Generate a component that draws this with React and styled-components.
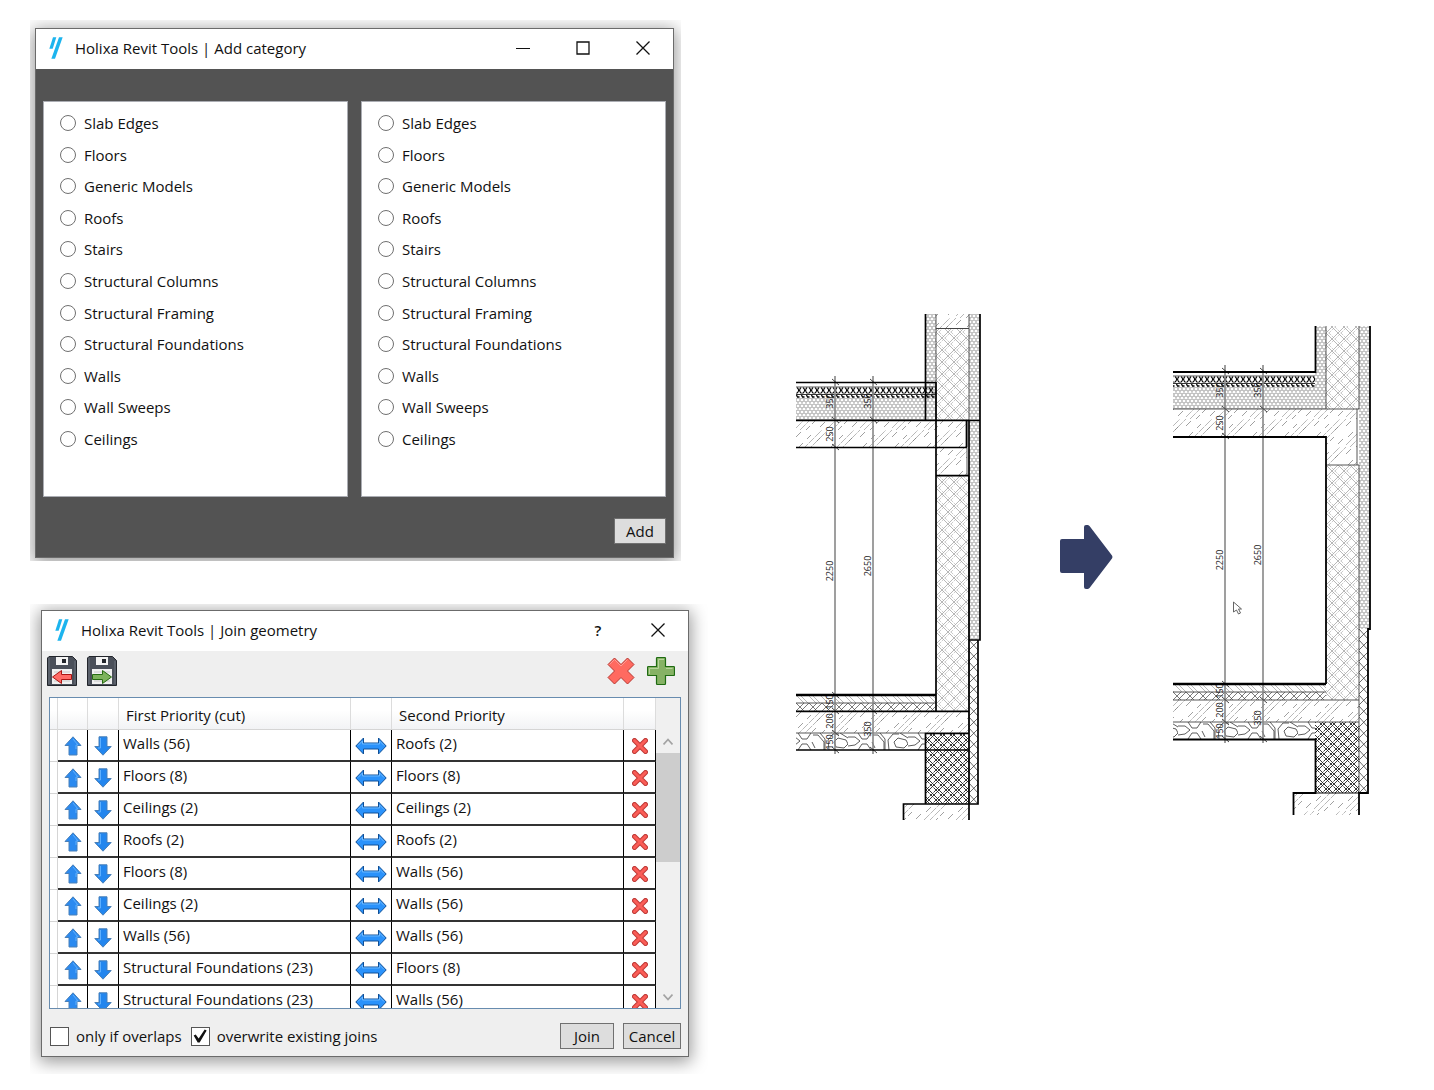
import React, { useState } from 'react'
import styled, { createGlobalStyle } from 'styled-components';

const GlobalStyle = createGlobalStyle`
  * {
    box-sizing: border-box;
  }

  body {
    margin: 0;
    background: #fff;
    color: #111;
    font-family: "Open Sans", "Noto Sans", sans-serif;
    font-size: 15px;
    line-height: 22px;
  }

  button, input {
    font: inherit;
    color: inherit;
    margin: 0;
    padding: 0;
  }
`;

const Page = styled.main`
  display: grid;
  grid-template-columns: 708fr 726fr;
`;

const Dialogs = styled.section`
  display: flex;
  flex-direction: column;
  gap: 43px;
  padding: 20px 0 16px 30px;
`;

/* cuts the shadow off at the edge, the way a captured window has it */
const Frame = styled.div`
  overflow: hidden;
  padding: ${props => props.$padding};
  margin-right: ${props => props.$end || '0'};
`;

const Window = styled.div`
  border: 1px solid #6b6b6b;
  background: ${props => props.$dark ? '#535353' : '#efefef'};
  box-shadow: 0 3px 16px 2px rgba(0, 0, 0, .4);
`;

const TitleBar = styled.header`
  display: flex;
  align-items: center;
  height: 40px;
  padding: 0 0 2px 13px;
  background: #fff;
`;

const Title = styled.h1`
  flex: 1;
  margin: 0 0 0 12px;
  font-size: 15px;
  font-weight: 400;
`;

const TitleButton = styled.button`
  display: flex;
  align-items: center;
  justify-content: center;
  width: 60px;
  height: 38px;
  border: 0;
  background: none;
  font-weight: 600;
`;

const Lists = styled.div`
  display: grid;
  grid-template-columns: 1fr 1fr;
  gap: 13px;
  padding: 32px 7px 0;
`;

const RadioList = styled.fieldset`
  display: flex;
  flex-direction: column;
  justify-content: space-between;
  height: 396px;
  min-width: 0;
  margin: 0;
  padding: 10px 16px 46px;
  border: 1px solid #abadb3;
  background: #fff;
`;

const RadioLabel = styled.label`
  display: flex;
  align-items: center;
  gap: 8px;
`;

const Radio = styled.input`
  appearance: none;
  width: 16px;
  height: 16px;
  border: 1px solid #707070;
  border-radius: 50%;
  background: #fff;

  &:checked {
    box-shadow: inset 0 0 0 3px #fff;
    background: #222;
  }
`;

const Actions = styled.footer`
  display: flex;
  align-items: center;
  justify-content: flex-end;
  gap: 9px;
  padding: ${props => props.$padding};
`;

const Button = styled.button`
  min-width: ${props => props.$width};
  height: 26px;
  border: 1px solid #707070;
  background: #ddd;
  line-height: 22px;
`;

const Toolbar = styled.div`
  display: flex;
  gap: 10px;
  padding: 5px 12px 11px 5px;
`;

const ToolButton = styled.button`
  display: flex;
  align-items: center;
  justify-content: center;
  width: 30px;
  height: 30px;
  border: 0;
  background: none;
`;

const Spacer = styled.div`
  flex: 1;
`;

const TableBox = styled.div`
  display: flex;
  height: 312px;
  margin: 0 7px;
  overflow: hidden;
  border: 1px solid #688caf;
  background: #fff;
`;

const TableArea = styled.div`
  flex: 1;
  min-width: 0;
`;

const Table = styled.table`
  width: 100%;
  table-layout: fixed;
  border-collapse: separate;
  border-spacing: 0;
`;

const Col = styled.col`
  width: ${props => props.$width};
`;

const Head = styled.th`
  height: 32px;
  padding: 2px 0 0 7px;
  border-right: 1px solid #dcdcdc;
  border-bottom: 1px solid #d5d5d5;
  background: linear-gradient(#fff 40%, #f2f3f5);
  text-align: left;
  font-weight: 400;
  line-height: 22px;
`;

const RowHead = styled.td`
  height: 32px;
  padding: 0;
  border-right: 1px solid #d5d5d5;
  border-bottom: 1px solid #d5d5d5;
`;

const Cell = styled.td`
  height: 32px;
  padding: 0 0 5px 4px;
  border-right: 1px solid #000;
  border-bottom: 2px solid #333;
  line-height: 22px;
`;

const IconCell = styled(Cell)`
  padding: 0;
`;

const CellButton = styled.button`
  display: flex;
  align-items: center;
  justify-content: center;
  width: 100%;
  height: 30px;
  padding-top: 2px;
  border: 0;
  background: none;
`;

const ScrollBar = styled.div`
  display: flex;
  flex-direction: column;
  width: 24px;
  padding-top: 32px;
  background: #f0f0f0;
`;

const ScrollButton = styled.button`
  display: flex;
  align-items: center;
  justify-content: center;
  height: 23px;
  border: 0;
  background: none;
`;

const Thumb = styled.div`
  height: 109px;
  background: #cdcdcd;
`;

const Option = styled.label`
  display: flex;
  align-items: center;
  gap: 7px;
`;

const CheckBox = styled.input`
  appearance: none;
  width: 19px;
  height: 19px;
  border: 1px solid #555;
  background: #fff;

  &:checked::before {
    content: "";
    display: block;
    height: 17px;
    background: #111;
    clip-path: polygon(2px 8px, 4px 7px, 7px 11px, 13px 2px, 15px 3px, 8px 15px, 6px 15px);
  }
`;

const Comparison = styled.section`
  display: flex;
  align-items: center;
  justify-content: space-between;
  align-self: start;
  padding: 290px 63px 0 88px;
`;

const DimText = styled.text`
  font-family: "Open Sans", sans-serif;
  font-size: 9px;
  fill: #222;
  text-anchor: middle;
`;

const Logo = () => (
  <svg width="14" height="22" viewBox="0 0 42 66" fill="#1cb4ee">
    <path d="M12 1h10L11 35H1z" />
    <path d="M30 1h11L18 65H7z" />
  </svg>
)

const CloseIcon = () => (
  <svg width="16" height="16" viewBox="0 0 16 16" stroke="#111" strokeWidth="1.3">
    <path d="M1.5 1.5l13 13M14.5 1.5l-13 13" />
  </svg>
)

const MinimizeIcon = () => (
  <svg width="14" height="14" viewBox="0 0 14 14" fill="#111">
    <path d="M0 7h14v1H0z" />
  </svg>
)

const MaximizeIcon = () => (
  <svg width="14" height="14" viewBox="0 0 14 14" fill="none" stroke="#111" strokeWidth="1.3">
    <path d="M1 1h12v12H1z" />
  </svg>
)

const DiskIcon = ({ out }) => (
  <svg width="30" height="30" viewBox="0 0 30 30">
    <path d="M2 .5h23.500l4 4V29.500H.5V2z" fill="#4b505a" stroke="#23262c" />
    <path d="M2 2v26M28 5v23" stroke="#6d727c" />
    <path d="M9 1h12v8H9z" fill="#f4f4f4" />
    <path d="M15 3h4v4h-4z" fill="#23262c" />
    <path d="M5 13h20v15H5z" fill="#f1f1f1" />
    <path d="M7 16h16M7 25h16" stroke="#c9c9c9" />
    {out
      ? <path d="M5.500 18.500h10v-4l9 6.500-9 6.500v-4h-10z" fill="#7db35c" stroke="#276b12" strokeLinejoin="round" />
      : <path d="M24.500 18.500h-10v-4L5.500 21l9 6.500v-4h10z" fill="#ff6b66" stroke="#ab1512" strokeLinejoin="round" />}
  </svg>
)

const crossPath = 'M7.500 1L14 7.500 20.500 1 27 7.500 20.500 14 27 20.500 20.500 27 14 20.500 7.500 27 1 20.500 7.500 14 1 7.500z'

const RemoveAllIcon = () => (
  <svg width="28" height="28" viewBox="0 0 28 28">
    <path d={crossPath} fill="#ff6a60" stroke="#b83630" strokeLinejoin="round" />
    <path d="M2.500 7.500l5-5L14 9l6.500-6.500" fill="none" stroke="#ff9b94" />
  </svg>
)

const AddIcon = () => (
  <svg width="28" height="28" viewBox="0 0 28 28">
    <path d="M9.500 1.500q0-1 1-1h7q1 0 1 1v8h8q1 0 1 1v7q0 1-1 1h-8v8q0 1-1 1h-7q-1 0-1-1v-8h-8q-1 0-1-1v-7q0-1 1-1h8z" fill="#86b265" stroke="#1f6b12" strokeWidth="1.2" />
    <path d="M2.500 17v-5.500h9v-9H17M19 11.500h6.500" fill="none" stroke="#b5d69b" />
  </svg>
)

const DeleteIcon = () => (
  <svg width="16" height="16" viewBox="0 0 16 16">
    <path d="M2.500 2.500l11 11M13.500 2.500l-11 11" stroke="#bf3a36" strokeWidth="5" strokeLinecap="round" />
    <path d="M2.500 2.500l11 11M13.500 2.500l-11 11" stroke="#fa5d57" strokeWidth="3" strokeLinecap="round" />
  </svg>
)

const UpIcon = () => (
  <svg width="18" height="20" viewBox="0 0 18 20">
    <path d="M9 .8L17 9.500h-4V19H5V9.500H1z" fill="#2b8af0" stroke="#4a80b8" />
    <path d="M9 3l5 6h-2v4" fill="none" stroke="#5eb0ff" />
  </svg>
)

const DownIcon = () => (
  <svg width="18" height="20" viewBox="0 0 18 20">
    <path d="M9 19.200L.8 10.500H5V.8h8v9.700h4.200z" fill="#2386ee" stroke="#4a80b8" />
    <path d="M6.500 2v10H4" fill="none" stroke="#5eb0ff" />
  </svg>
)

const SwapIcon = () => (
  <svg width="32" height="18" viewBox="0 0 32 18">
    <path d="M.8 9L8.500 1v5h15V1l7.700 8-7.700 8v-5h-15v5z" fill="#2a92fb" stroke="#0f4f96" strokeLinejoin="round" />
    <path d="M3 8.500L7.500 4v3h17V4L29 8.500" fill="none" stroke="#6bb8ff" />
  </svg>
)

const ChevronIcon = ({ down }) => (
  <svg width="10" height="8" viewBox="0 0 10 8" fill="none" stroke="#a3a3a3" strokeWidth="1.8">
    <path d={down ? 'M.5 1.500L5 6.500l4.500-5' : 'M.5 6.500L5 1.500l4.500 5'} />
  </svg>
)

const ArrowIcon = () => (
  <svg width="53" height="66" viewBox="0 0 53 66" fill="#343e65">
    <path d="M2 14h22V2q0-2 2-2h1.500q1 0 2 1L52 30.500q1 1.500 0 3L29.500 63q-1 1-2 1H26q-2 0-2-2V48H2q-2 0-2-2V16q0-2 2-2z" />
  </svg>
)

// hatch fills of the wall and floor layers
const Hatches = ({ id }) => (
  <defs>
    <pattern id={`${id}-hex`} width="4" height="6" patternUnits="userSpaceOnUse">
      <path d="M0 1l2-1 2 1v2L2 4 0 3zM2 4v2" fill="none" stroke="#777" strokeWidth=".6" />
    </pattern>
    <pattern id={`${id}-lattice`} x="140" y="186" width="12" height="12" patternUnits="userSpaceOnUse">
      <path d="M0 12L12 0M0 0l12 12" stroke="#888" strokeWidth=".6" />
      <path d="M3 12l9-9M0 3l3-3M0 9l3 3M3 0l9 9" stroke="#aaa" strokeWidth=".6" strokeDasharray="3 1" />
    </pattern>
    <pattern id={`${id}-dense`} width="10" height="10" patternUnits="userSpaceOnUse">
      <path d="M0 10L10 0M3 10l7-7M0 3l3-3M0 0l10 10M0 7l3 3M3 0l7 7" stroke="#222" strokeWidth=".9" strokeDasharray="5 .6" />
    </pattern>
    <pattern id={`${id}-concrete`} width="32" height="28" patternUnits="userSpaceOnUse">
      <path d="M4 28L32 0M0 26L26 0" stroke="#888" strokeWidth=".6" strokeDasharray="8 1" />
      <path d="M10 28l4-4M16 22l4-4M24 25l5-5M2 18l5-5M11 9l4-4M0 7l5-5M21 11l3-3" stroke="#777" strokeWidth=".7" />
    </pattern>
    <pattern id={`${id}-coil`} x="0" y="97" width="6" height="7" patternUnits="userSpaceOnUse">
      <path d="M1 .5q3.500 3-.5 6M5 .5q-3 3 .5 6" fill="none" stroke="#000" strokeWidth="1.1" />
    </pattern>
    <pattern id={`${id}-dash`} x="0" y="104" width="5" height="4" patternUnits="userSpaceOnUse">
      <path d="M0 .5h5" stroke="#000" strokeWidth=".8" />
      <path d="M.5 1l1 2M1 3h2.500" stroke="#000" strokeWidth="1.3" />
    </pattern>
    <pattern id={`${id}-screed`} x="0" y="405" width="12" height="8" patternUnits="userSpaceOnUse">
      <path d="M0 0l8 8M4 0l8 8" stroke="#888" strokeWidth=".6" />
    </pattern>
    <pattern id={`${id}-board`} x="0" y="413" width="13" height="8" patternUnits="userSpaceOnUse">
      <path d="M0 8l8-8M5 8l8-8M0 0l8 8" fill="none" stroke="#444" strokeWidth=".7" />
    </pattern>
    <pattern id={`${id}-strip`} x="173" y="350" width="9" height="11" patternUnits="userSpaceOnUse">
      <path d="M0 0l9 10M9 1L0 10" stroke="#444" strokeWidth=".8" />
    </pattern>
    <pattern id={`${id}-stone`} x="-8" y="443" width="60" height="17" patternUnits="userSpaceOnUse">
      <path
        d="M0 4h7l5 4-5 4-7 1M10 0l4 6h5l4-6M10 17l4-6h5l4 6M25 2h5l6 7v8M32 0l5 6v11M41 17l-1-10 5-6h6M52 0l8 5M46 9l4-4 8 2 2 4-4 4-8-1zM24 9l3 6"
        fill="none"
        stroke="#333"
        strokeWidth=".8"
      />
    </pattern>
  </defs>
)

const dims = [
  [37, 111, '350'],
  [37, 144, '250'],
  [37, 281, '2250'],
  [37, 412, '150'],
  [37, 431, '200'],
  [37, 452, '150'],
  [75, 111, '350'],
  [75, 276, '2650'],
  [75, 439, '350'],
]

const tickRows = [92, 130, 157, 405, 421, 443, 460]

const Dimensions = () => (
  <g>
    <path d="M39 86v378M77 86v378" stroke="#888" strokeWidth="1.6" />
    {tickRows.map(y => <path key={y} d={`M36 ${y - 3}l7 6`} stroke="#333" strokeWidth=".9" />)}
    {[92, 130, 421, 460].map(y => <path key={y} d={`M74 ${y - 3}l7 6`} stroke="#333" strokeWidth=".9" />)}
    {dims.map(([x, y, value]) => (
      <DimText key={`${x}-${y}`} transform={`translate(${x} ${y}) rotate(-90)`}>{value}</DimText>
    ))}
  </g>
)

const Layers = ({ id, left, top, bottom, latticeTop, insulationEnd }) => {
  const fill = name => `url(#${id}-${name})`
  return (
    <g>
      <rect x={129} y={top} width="11" height={108 - top} fill={fill('hex')} />
      <rect x={173} y={top} width="11" height={350 - top} fill={fill('hex')} />
      <rect x={140} y={top} width="33" height={latticeTop - top} fill={fill('concrete')} />
      <rect x={140} y={latticeTop} width="33" height={130 - latticeTop} fill={fill('lattice')} />
      <rect x={140} y="186" width="33" height="235" fill={fill('lattice')} />
      <rect x={left} y="97" width={insulationEnd - left} height="7" fill={fill('coil')} />
      <rect x={left} y="104" width={insulationEnd - left} height="4" fill={fill('dash')} />
      <rect x={left} y="108" width={140 - left} height="22" fill={fill('hex')} />
      <rect x={left} y="130" width={171 - left} height="28" fill={fill('concrete')} />
      <rect x={140} y="158" width="31" height="28" fill={fill('concrete')} />
      <rect x={left} y="405" width={140 - left} height="8" fill={fill('screed')} />
      <rect x={left} y="413" width={140 - left} height="8" fill={fill('board')} />
      <rect x={left} y="421" width={173 - left} height="22" fill={fill('concrete')} />
      <rect x={left} y="443" width={129 - left} height="17" fill={fill('stone')} />
      <rect x={129} y="443" width="44" height="71" fill={fill('dense')} />
      <rect x={107} y="514" width="66" height={bottom - 514} fill={fill('concrete')} />
      <rect x={173} y="350" width="9" height="164" fill={fill('strip')} />
      <path
        d={`M${left} 97H${insulationEnd}M${left} 413H140M140 ${top}V130M173 ${top}V130M${left} 421H173M${left} 443H173M173 186V514M171 130V186M140 186H173M${left} 130H173`}
        fill="none"
        stroke="#444"
        strokeWidth=".9"
      />
      <Dimensions />
    </g>
  )
}

const BeforeDrawing = () => (
  <svg width="204" height="536" viewBox="0 0 204 536" role="img" aria-label="Section before joining">
    <Hatches id="before" />
    <Layers id="before" left={0} top={24} bottom={530} latticeTop={38} insulationEnd={140} />
    <path d="M140 38.500h33" stroke="#444" />
    <path
      d="M129.500 24V130M0 92.500H140M140 92V421M0 130.500H184M0 157.500H171M170.500 130V157M140 185.500H173M173 130V530M184 24V350H173M182 350V514H107.500V530M0 421.500H173M129.500 514V443.500H173M0 460H173"
      fill="none"
      stroke="#000"
      strokeWidth="1.7"
    />
    <path d="M0 405H140" stroke="#000" strokeWidth="2.5" />
  </svg>
)

const AfterDrawing = () => (
  <svg width="198" height="536" viewBox="-13 11 198 536" role="img" aria-label="Section after joining">
    <Hatches id="after" />
    <Layers id="after" left={-13} top={47} bottom={536} latticeTop={47} insulationEnd={129} />
    <path
      d="M129.500 47V93H-13M-13 158H140V405M184 47V350H182V514H173V536M-13 460.500H129.500V514H107.500V536"
      fill="none"
      stroke="#000"
      strokeWidth="1.8"
    />
    <path d="M129 514H173" stroke="#000" />
    <path d="M-13 405H140" stroke="#000" strokeWidth="2.5" />
    <path d="M47.500 323v10l3-2 2 4 2-1-2-4h3z" fill="#fff" stroke="#555" strokeWidth=".9" />
  </svg>
)

const categories = [
  'Slab Edges',
  'Floors',
  'Generic Models',
  'Roofs',
  'Stairs',
  'Structural Columns',
  'Structural Framing',
  'Structural Foundations',
  'Walls',
  'Wall Sweeps',
  'Ceilings',
]

const joins = [
  ['Walls (56)', 'Roofs (2)'],
  ['Floors (8)', 'Floors (8)'],
  ['Ceilings (2)', 'Ceilings (2)'],
  ['Roofs (2)', 'Roofs (2)'],
  ['Floors (8)', 'Walls (56)'],
  ['Ceilings (2)', 'Walls (56)'],
  ['Walls (56)', 'Walls (56)'],
  ['Structural Foundations (23)', 'Floors (8)'],
  ['Structural Foundations (23)', 'Walls (56)'],
]

const CategoryList = ({ name, label }) => (
  <RadioList aria-label={label}>
    {categories.map(category => (
      <RadioLabel key={category}>
        <Radio type="radio" name={name} value={category} />
        {category}
      </RadioLabel>
    ))}
  </RadioList>
)

const AddCategory = () => (
  <Window $dark>
    <TitleBar>
      <Logo />
      <Title>Holixa Revit Tools | Add category</Title>
      <TitleButton aria-label="Minimize"><MinimizeIcon /></TitleButton>
      <TitleButton aria-label="Maximize"><MaximizeIcon /></TitleButton>
      <TitleButton aria-label="Close"><CloseIcon /></TitleButton>
    </TitleBar>
    <Lists>
      <CategoryList name="first" label="First category" />
      <CategoryList name="second" label="Second category" />
    </Lists>
    <Actions $padding="21px 7px 13px">
      <Button $width="52px">Add</Button>
    </Actions>
  </Window>
)

const JoinRow = ({ first, second }) => (
  <tr>
    <RowHead />
    <IconCell><CellButton aria-label="Move up"><UpIcon /></CellButton></IconCell>
    <IconCell><CellButton aria-label="Move down"><DownIcon /></CellButton></IconCell>
    <Cell>{first}</Cell>
    <IconCell><CellButton aria-label="Swap"><SwapIcon /></CellButton></IconCell>
    <Cell>{second}</Cell>
    <IconCell><CellButton aria-label="Delete"><DeleteIcon /></CellButton></IconCell>
  </tr>
)

const JoinGeometry = () => {
  const [overlaps, setOverlaps] = useState(false)
  const [overwrite, setOverwrite] = useState(true)

  return (
    <Window>
      <TitleBar>
        <Logo />
        <Title>Holixa Revit Tools | Join geometry</Title>
        <TitleButton aria-label="Help">?</TitleButton>
        <TitleButton aria-label="Close"><CloseIcon /></TitleButton>
      </TitleBar>
      <Toolbar>
        <ToolButton aria-label="Load"><DiskIcon /></ToolButton>
        <ToolButton aria-label="Save"><DiskIcon out /></ToolButton>
        <Spacer />
        <ToolButton aria-label="Remove all"><RemoveAllIcon /></ToolButton>
        <ToolButton aria-label="Add"><AddIcon /></ToolButton>
      </Toolbar>
      <TableBox>
        <TableArea>
          <Table>
            <colgroup>
              <Col $width="8px" />
              <Col $width="30px" />
              <Col $width="31px" />
              <Col />
              <Col $width="41px" />
              <Col />
              <Col $width="32px" />
            </colgroup>
            <thead>
              <tr>
                <Head />
                <Head />
                <Head />
                <Head>First Priority (cut)</Head>
                <Head />
                <Head>Second Priority</Head>
                <Head />
              </tr>
            </thead>
            <tbody>
              {joins.map(([first, second], i) => <JoinRow key={i} first={first} second={second} />)}
            </tbody>
          </Table>
        </TableArea>
        <ScrollBar>
          <ScrollButton aria-label="Scroll up"><ChevronIcon /></ScrollButton>
          <Thumb />
          <Spacer />
          <ScrollButton aria-label="Scroll down"><ChevronIcon down /></ScrollButton>
        </ScrollBar>
      </TableBox>
      <Actions $padding="14px 7px 7px 8px">
        <Option>
          <CheckBox type="checkbox" checked={overlaps} onChange={() => setOverlaps(!overlaps)} />
          only if overlaps
        </Option>
        <Option>
          <CheckBox type="checkbox" checked={overwrite} onChange={() => setOverwrite(!overwrite)} />
          overwrite existing joins
        </Option>
        <Spacer />
        <Button $width="54px">Join</Button>
        <Button $width="58px">Cancel</Button>
      </Actions>
    </Window>
  )
}

const App = () => (
  <>
    <GlobalStyle />
    <Page>
      <Dialogs>
        <Frame $padding="8px 7px 3px 5px" $end="27px">
          <AddCategory />
        </Frame>
        <Frame $padding="6px 19px 17px 11px">
          <JoinGeometry />
        </Frame>
      </Dialogs>
      <Comparison>
        <BeforeDrawing />
        <ArrowIcon />
        <AfterDrawing />
      </Comparison>
    </Page>
  </>
)

export default App
